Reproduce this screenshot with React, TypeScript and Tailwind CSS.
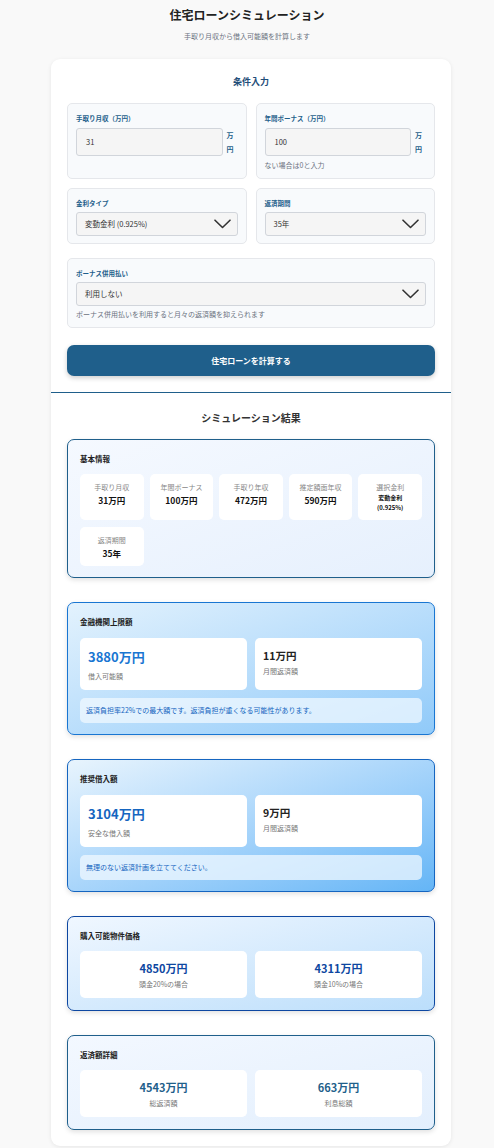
const ChevronDown = () => (
  <svg width="17" height="10" viewBox="0 0 17 10" fill="none" className="shrink-0">
    <path d="M1 1.2L8.5 8.5L16 1.2" stroke="#333" strokeWidth="1.6" strokeLinecap="round" strokeLinejoin="round" />
  </svg>
)

const FieldLabel = ({children}: {children: React.ReactNode}) => (
  <div className="text-[6.5px] leading-[10px] font-bold text-[#1f5f8b]">{children}</div>
)

const Hint = ({children, className = ''}: {children: React.ReactNode; className?: string}) => (
  <div className={`text-[7px] leading-[10px] text-[#6b7280] ${className}`}>{children}</div>
)

const SelectBox = ({value}: {value: string}) => (
  <div className="mt-[4px] flex h-[24px] items-center justify-between rounded-[3px] border border-[#d1d5db] bg-[#f5f5f5] pl-[8px] pr-[6px] text-[7.5px] text-[#333]">
    <span>{value}</span>
    <ChevronDown />
  </div>
)

const InputRow = ({value}: {value: string}) => (
  <div className="mt-[5px] flex items-center">
    <div className="flex h-[28px] flex-1 items-center rounded-[3px] border border-[#d1d5db] bg-[#f5f5f5] px-[9px] text-[7.5px] text-[#333]">
      {value}
    </div>
    <div className="ml-[4px] w-[11px] text-[7px] leading-[14px] font-bold text-[#1f5f8b]">万円</div>
  </div>
)

const basicItems = [
  {label: '手取り月収', value: '31万円'},
  {label: '年間ボーナス', value: '100万円'},
  {label: '手取り年収', value: '472万円'},
  {label: '推定額面年収', value: '590万円'},
  {label: '選択金利', value: 'rate'},
  {label: '返済期間', value: '35年'},
]

const LimitCard = ({
  title,
  amount,
  amountLabel,
  monthly,
  note,
  wrap,
  amountColor,
}: {
  title: string
  amount: string
  amountLabel: string
  monthly: string
  note: string
  wrap: string
  amountColor: string
}) => (
  <div className={`rounded-[7px] border px-[12px] pt-[14px] pb-[11px] shadow-[0_2px_5px_rgba(0,0,0,0.12)] ${wrap}`}>
    <div className="text-[7.5px] leading-[10px] font-bold text-[#222]">{title}</div>
    <div className="mt-[11px] grid grid-cols-2 gap-[8px]">
      <div className="h-[52px] rounded-[5px] bg-white px-[8px] pt-[11px]">
        <div className={`text-[13px] leading-[16px] font-bold ${amountColor}`}>{amount}</div>
        <div className="mt-[6px] text-[7px] leading-[10px] text-[#777]">{amountLabel}</div>
      </div>
      <div className="h-[52px] rounded-[5px] bg-white px-[8px] pt-[11px]">
        <div className="text-[10.5px] leading-[14px] font-bold text-[#222]">{monthly}</div>
        <div className="mt-[3px] text-[7px] leading-[10px] text-[#777]">月間返済額</div>
      </div>
    </div>
    <div className="mt-[8px] flex h-[25px] items-center rounded-[5px] bg-[rgba(240,248,255,0.75)] px-[6px] text-[7px] text-[#1565c0]">
      {note}
    </div>
  </div>
)

const PairCard = ({
  title,
  items,
  wrap,
  valueColor,
}: {
  title: string
  items: {value: string; label: string}[]
  wrap: string
  valueColor: string
}) => (
  <div className={`rounded-[7px] border px-[12px] pt-[14px] pb-[12px] shadow-[0_2px_5px_rgba(0,0,0,0.12)] ${wrap}`}>
    <div className="text-[7.5px] leading-[10px] font-bold text-[#222]">{title}</div>
    <div className="mt-[10px] grid grid-cols-2 gap-[8px]">
      {items.map(item => (
        <div key={item.label} className="h-[47px] rounded-[5px] bg-white pt-[10px] text-center">
          <div className={`text-[11px] leading-[14px] font-bold ${valueColor}`}>{item.value}</div>
          <div className="mt-[4px] text-[7px] leading-[10px] text-[#777]">{item.label}</div>
        </div>
      ))}
    </div>
  </div>
)

export default function App() {
  return (
    <div className="min-h-screen bg-[#f9f9f9] pb-[2px] font-['Noto_Sans_CJK_JP','Noto_Sans',sans-serif] text-[#333]">
      <div className="pt-[7px] text-center">
        <h1 className="text-[12px] leading-[16px] font-bold text-[#222]">住宅ローンシミュレーション</h1>
        <p className="mt-[8px] text-[7px] leading-[10px] text-[#6b7280]">手取り月収から借入可能額を計算します</p>
      </div>

      <div className="mt-[18px] ml-[51px] w-[400px] rounded-[9px] bg-white shadow-[0_1px_4px_rgba(0,0,0,0.08)]">
        <section className="px-[16px] pt-[17px] pb-[16px]">
          <h2 className="text-center text-[9px] leading-[12px] font-bold text-[#1f4e79]">条件入力</h2>

          <div className="mt-[15px] grid grid-cols-2 gap-[9px]">
            <div className="rounded-[5px] border border-[#e5e7eb] bg-[#f8fafc] px-[8px] pt-[9px] pb-[8px]">
              <FieldLabel>手取り月収（万円）</FieldLabel>
              <InputRow value="31" />
            </div>
            <div className="rounded-[5px] border border-[#e5e7eb] bg-[#f8fafc] px-[8px] pt-[9px] pb-[8px]">
              <FieldLabel>年間ボーナス（万円）</FieldLabel>
              <InputRow value="100" />
              <Hint className="mt-[4px]">ない場合は0と入力</Hint>
            </div>
            <div className="rounded-[5px] border border-[#e5e7eb] bg-[#f8fafc] px-[8px] pt-[9px] pb-[7px]">
              <FieldLabel>金利タイプ</FieldLabel>
              <SelectBox value="変動金利 (0.925%)" />
            </div>
            <div className="rounded-[5px] border border-[#e5e7eb] bg-[#f8fafc] px-[8px] pt-[9px] pb-[7px]">
              <FieldLabel>返済期間</FieldLabel>
              <SelectBox value="35年" />
            </div>
          </div>

          <div className="mt-[14px] rounded-[5px] border border-[#e5e7eb] bg-[#f8fafc] px-[8px] pt-[9px] pb-[8px]">
            <FieldLabel>ボーナス併用払い</FieldLabel>
            <SelectBox value="利用しない" />
            <Hint className="mt-[3px]">ボーナス併用払いを利用すると月々の返済額を抑えられます</Hint>
          </div>

          <button className="mt-[17px] flex h-[31px] w-full items-center justify-center rounded-[7px] bg-[#1f5f8b] text-[8px] font-bold text-white shadow-[0_2px_5px_rgba(0,0,0,0.2)]">
            住宅ローンを計算する
          </button>
        </section>

        <section className="border-t-[1.5px] border-[#1f5f8b] px-[16px] pt-[18px] pb-[16px]">
          <h2 className="text-center text-[10px] leading-[14px] font-bold text-[#333]">シミュレーション結果</h2>

          <div className="mt-[14px] flex flex-col gap-[24px]">
            <div className="rounded-[7px] border border-[#1f5f8b] bg-gradient-to-br from-[#f5f9ff] to-[#e6f0fd] px-[12px] pt-[14px] pb-[11px] shadow-[0_2px_5px_rgba(0,0,0,0.12)]">
              <div className="text-[7.5px] leading-[10px] font-bold text-[#222]">基本情報</div>
              <div className="mt-[10px] grid grid-cols-5 gap-x-[6px] gap-y-[7px]">
                {basicItems.map(item => (
                  <div key={item.label} className="rounded-[5px] bg-white px-[3px] pt-[8px] pb-[7px] text-center">
                    <div className="text-[7px] leading-[10px] text-[#888]">{item.label}</div>
                    {item.value === 'rate' ? (
                      <div className="mt-[1px] text-[6px] leading-[10px] font-bold text-[#111]">
                        変動金利
                        <br />
                        (0.925%)
                      </div>
                    ) : (
                      <div className="mt-[2px] text-[8.5px] leading-[12px] font-bold text-[#111]">{item.value}</div>
                    )}
                  </div>
                ))}
              </div>
            </div>

            <LimitCard
              title="金融機関上限額"
              amount="3880万円"
              amountLabel="借入可能額"
              monthly="11万円"
              note="返済負担率22%での最大額です。返済負担が重くなる可能性があります。"
              wrap="border-[#1976d2] bg-gradient-to-br from-[#e3f2fd] to-[#90caf9]"
              amountColor="text-[#1976d2]"
            />

            <LimitCard
              title="推奨借入額"
              amount="3104万円"
              amountLabel="安全な借入額"
              monthly="9万円"
              note="無理のない返済計画を立ててください。"
              wrap="border-[#1565c0] bg-gradient-to-br from-[#e8f4fd] to-[#64b5f6]"
              amountColor="text-[#1565c0]"
            />

            <PairCard
              title="購入可能物件価格"
              items={[
                {value: '4850万円', label: '頭金20%の場合'},
                {value: '4311万円', label: '頭金10%の場合'},
              ]}
              wrap="border-[#0d47a1] bg-gradient-to-br from-[#f0f7ff] to-[#bbdefb]"
              valueColor="text-[#0d47a1]"
            />

            <PairCard
              title="返済額詳細"
              items={[
                {value: '4543万円', label: '総返済額'},
                {value: '663万円', label: '利息総額'},
              ]}
              wrap="border-[#1f5f8b] bg-gradient-to-br from-[#f3f8ff] to-[#e3effd]"
              valueColor="text-[#1f5f8b]"
            />
          </div>
        </section>
      </div>
    </div>
  )
}
